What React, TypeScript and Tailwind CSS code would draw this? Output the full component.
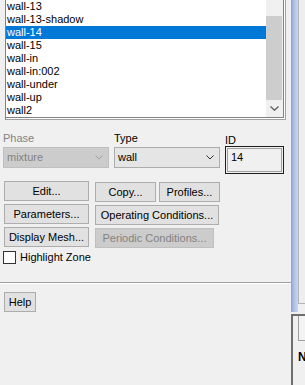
import React from "react";

const zones = [
    "wall-13",
    "wall-13-shadow",
    "wall-14",
    "wall-15",
    "wall-in",
    "wall-in:002",
    "wall-under",
    "wall-up",
    "wall2",
];

const Chevron = ({color = "#333333"}: {color?: string}) => (
    <svg width="8" height="5" viewBox="0 0 8 5" fill="none">
        <polyline points="0.5,0.5 4,4 7.5,0.5" stroke={color} strokeWidth="1" />
    </svg>
);

const Btn = ({label, w, disabled = false, top = false}: {label: string; w: string; disabled?: boolean; top?: boolean}) => (
    <div
        className={
            (disabled
                ? "border-[#bfbfbf] bg-[#cccccc] text-[#838383] "
                : "border-[#adadad] bg-[#e1e1e1] text-black ") +
            (top ? "mt-[1px] " : "") +
            w +
            " flex h-[20px] items-center justify-center border leading-[13px]"
        }
    >
        {label}
    </div>
);

const App = () => {
    const selected = "wall-14";

    return (
        <div
            className="flex h-[385px] w-[305px] overflow-hidden bg-[#f0f0f0] text-[11px] text-black"
            style={{fontFamily: '"Liberation Sans", Arial, sans-serif'}}
        >
            {/* main panel */}
            <div className="flex w-[291px] flex-col">
                {/* zone list */}
                <div className="ml-[5px] flex h-[120px] w-[281px] border-b border-l border-r border-b-[#a0a0a0] border-l-[#828282] border-r-[#a0a0a0]">
                    <div className="flex flex-1 border-b border-r border-white">
                        <div className="flex flex-1 overflow-hidden border-b border-r border-[#828282] bg-white">
                            <div className="w-[260px] overflow-hidden">
                                {zones.map((z) => (
                                    <div
                                        key={z}
                                        className={
                                            z === selected
                                                ? "h-[13px] bg-[#0078d7] pl-[1px] leading-[13px] text-white"
                                                : "h-[13px] pl-[1px] leading-[13px]"
                                        }
                                    >
                                        {z}
                                    </div>
                                ))}
                            </div>
                            <div className="flex w-[17px] flex-col bg-[#f0f0f0]">
                                <div className="h-[16px]" />
                                <div className="mr-[1px] h-[84px] bg-[#cdcdcd]" />
                                <div className="flex flex-1 items-center justify-center pr-[1px]">
                                    <svg width="9" height="5" viewBox="0 0 9 5" fill="none">
                                        <polyline points="0.5,0.5 4.5,4.2 8.5,0.5" stroke="#606060" strokeWidth="1.4" />
                                    </svg>
                                </div>
                            </div>
                        </div>
                    </div>
                </div>

                {/* phase / type / id */}
                <div className="mt-[12px] flex">
                    <div className="ml-[3px] flex w-[106px] flex-col">
                        <div className="h-[13px] leading-[13px] text-[#838383]">Phase</div>
                        <div className="mt-[2px] flex h-[21px] items-center justify-between border border-[#bfbfbf] bg-[#cccccc] pl-[3px] pr-[5px] text-[#838383]">
                            <span>mixture</span>
                            <Chevron color="#a0a0a0" />
                        </div>
                    </div>
                    <div className="ml-[5px] flex w-[106px] flex-col">
                        <div className="h-[13px] leading-[13px]">Type</div>
                        <div className="mt-[2px] flex h-[21px] items-center justify-between border border-[#acacac] bg-[#e5e5e5] pl-[3px] pr-[5px]">
                            <span>wall</span>
                            <Chevron />
                        </div>
                    </div>
                    <div className="ml-[5px] flex w-[59px] flex-col">
                        <div className="mt-[2px] h-[12px] leading-[13px]">ID</div>
                        <div className="h-[28px] border border-[#1e1e1e] p-[1px]">
                            <div className="h-full border border-[#a0a0a0] pl-[3px] pt-[2px] leading-[13px]">14</div>
                        </div>
                    </div>
                </div>

                {/* buttons */}
                <div className="mt-[7px] flex flex-col pl-[4px]">
                    <div className="flex h-[23px] items-start">
                        <Btn label="Edit..." w="w-[85px]" />
                        <div className="ml-[6px] flex gap-[3px]">
                            <Btn label="Copy..." w="w-[61px]" top />
                            <Btn label="Profiles..." w="w-[61px]" top />
                        </div>
                    </div>
                    <div className="flex h-[23px] items-start">
                        <Btn label="Parameters..." w="w-[85px]" />
                        <div className="ml-[6px]">
                            <Btn label="Operating Conditions..." w="w-[124px]" top />
                        </div>
                    </div>
                    <div className="flex h-[23px] items-start">
                        <Btn label="Display Mesh..." w="w-[85px]" />
                        <div className="ml-[6px]">
                            <Btn label="Periodic Conditions..." w="w-[119px]" disabled top />
                        </div>
                    </div>
                </div>

                {/* highlight zone */}
                <div className="ml-[3px] flex h-[14px] items-center gap-[4px]">
                    <div className="h-[13px] w-[13px] border border-[#333333] bg-white" />
                    <span className="leading-[13px]">Highlight Zone</span>
                </div>

                <div className="mt-[18px] h-[2px] border-b border-t border-b-white border-t-[#a0a0a0]" />

                <div className="ml-[4px] mt-[8px] flex">
                    <Btn label="Help" w="w-[32px]" />
                </div>
            </div>

            {/* edge of the window behind */}
            <div className="flex w-[14px] flex-col">
                <div className="flex h-[312px]">
                    <div className="w-[7px] bg-gradient-to-r from-[#8ea3d6] via-[#b3c3e9] to-[#c9d4ef]" />
                    <div className="flex flex-1 flex-col">
                        <div className="h-[304px] border-b border-l border-[#b4b4b4] bg-[#eeeeee]" />
                    </div>
                </div>
                <div className="mt-[2px] flex flex-1 flex-col border-l-2 border-t-2 border-[#6e6e6e] bg-[#f0f0f0]">
                    <div className="ml-[5px] h-[25px] border-b border-l border-[#a0a0a0] bg-[#f3f3f3]" />
                    <div className="ml-[5px] mt-[10px] text-[12px] font-bold leading-[13px]">N</div>
                </div>
            </div>
        </div>
    );
};

export default App;
